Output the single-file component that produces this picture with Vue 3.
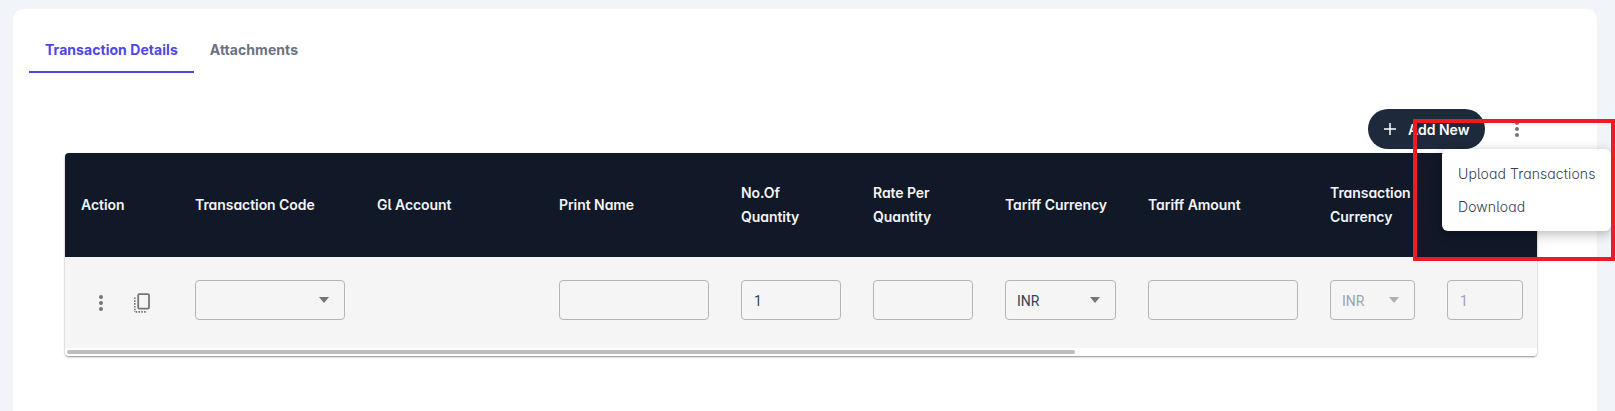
<template>
  <div class="page">
    <div class="card">
      <div class="tabs">
        <button
          v-for="(tab, idx) in tabs"
          :key="tab"
          type="button"
          class="tab"
          :class="{ active: idx === 0 }"
        >
          {{ tab }}
        </button>
      </div>

      <div class="toolbar">
        <button type="button" class="add-btn">
          <svg class="plus" viewBox="0 0 12 12" width="12" height="12">
            <path d="M6 0v12M0 6h12" stroke="#fff" stroke-width="1.5" fill="none" />
          </svg>
          Add New
        </button>
        <div class="more">
          <button type="button" class="dots-btn" aria-label="More">
            <span class="dots"></span>
          </button>
          <ul class="menu">
            <li v-for="item in menuItems" :key="item" class="menu-item">{{ item }}</li>
          </ul>
          <!-- annotation box from the screenshot -->
          <div class="highlight"></div>
        </div>
      </div>

      <div class="table-wrap">
        <table class="grid">
          <colgroup>
            <col v-for="col in columns" :key="col.key" :style="{ width: col.width + 'px' }" />
          </colgroup>
          <thead>
            <tr>
              <th v-for="col in columns" :key="col.key">
                <span v-for="line in col.title" :key="line" class="th-line">{{ line }}</span>
              </th>
            </tr>
          </thead>
          <tbody>
            <tr>
              <td v-for="col in columns" :key="col.key">
                <div v-if="col.type === 'action'" class="actions">
                  <button type="button" class="row-dots" aria-label="Row menu">
                    <span class="dots small"></span>
                  </button>
                  <svg class="copy" viewBox="0 0 18 20" width="18" height="20" fill="none">
                    <rect x="5.2" y="1.2" width="10.8" height="14.4" rx="1" stroke="#757575" stroke-width="1.8" />
                    <path d="M1.8 4.5V19" stroke="#757575" stroke-width="1.6" stroke-dasharray="1.6 1.2" />
                    <path d="M2.6 18.9H14" stroke="#757575" stroke-width="1.6" stroke-dasharray="1.6 1.2" />
                  </svg>
                </div>
                <div
                  v-else-if="col.type === 'select'"
                  class="field select"
                  :class="{ disabled: col.disabled }"
                  :style="{ width: col.field + 'px' }"
                >
                  <span class="value">{{ col.value }}</span>
                  <span class="caret"></span>
                </div>
                <input
                  v-else-if="col.type === 'input'"
                  class="field"
                  :class="{ disabled: col.disabled }"
                  :style="{ width: col.field + 'px' }"
                  :value="col.value"
                  :disabled="col.disabled"
                />
              </td>
            </tr>
          </tbody>
        </table>
        <div class="scroll-track">
          <div class="scroll-thumb"></div>
        </div>
      </div>
    </div>
  </div>
</template>

<script setup>
const tabs = ['Transaction Details', 'Attachments']
const menuItems = ['Upload Transactions', 'Download']

const columns = [
  { key: 'action', title: ['Action'], width: 114, type: 'action' },
  { key: 'code', title: ['Transaction Code'], width: 182, type: 'select', field: 150, value: '' },
  { key: 'gl', title: ['Gl Account'], width: 182, type: 'none' },
  { key: 'print', title: ['Print Name'], width: 182, type: 'input', field: 150, value: '' },
  { key: 'qty', title: ['No.Of', 'Quantity'], width: 132, type: 'input', field: 100, value: '1' },
  { key: 'rate', title: ['Rate Per', 'Quantity'], width: 132, type: 'input', field: 100, value: '' },
  { key: 'tcur', title: ['Tariff Currency'], width: 143, type: 'select', field: 111, value: 'INR' },
  { key: 'tamt', title: ['Tariff Amount'], width: 182, type: 'input', field: 150, value: '' },
  { key: 'cur', title: ['Transaction', 'Currency'], width: 117, type: 'select', field: 85, value: 'INR', disabled: true },
  { key: 'ex', title: [], width: 106, type: 'input', field: 76, value: '1', disabled: true },
]
</script>

<style scoped>
.page {
  height: 100vh;
  box-sizing: border-box;
  padding: 9px 18px 0 13px;
  background: #f1f4f9;
  overflow: hidden;
  font-family: Inter, "Noto Sans", sans-serif;
  font-feature-settings: "cv11", "cv05";
}

.card {
  height: 100vh;
  box-sizing: border-box;
  padding: 16px 16px 0;
  background: #fff;
  border-radius: 10px;
}

.tabs {
  display: flex;
}

.tab {
  height: 48px;
  padding: 2px 16px 0;
  border: none;
  border-bottom: 2px solid transparent;
  background: none;
  font: inherit;
  font-feature-settings: normal;
  font-size: 14px;
  font-weight: 700;
  letter-spacing: 0.05px;
  color: #6b7280;
}

.tab.active {
  color: #4f46e5;
  border-bottom-color: #4f46e5;
}

.toolbar {
  display: flex;
  justify-content: flex-end;
  align-items: center;
  gap: 16px;
  margin: 36px 48px 4px 0;
}

.add-btn {
  display: flex;
  align-items: center;
  gap: 12px;
  width: 117px;
  height: 40px;
  padding: 0 16px;
  border: none;
  border-radius: 20px;
  background: #1e293b;
  color: #fff;
  font: inherit;
  font-size: 14px;
  font-weight: 600;
  white-space: nowrap;
}

.plus {
  flex: none;
}

.more {
  position: relative;
  width: 32px;
  height: 40px;
}

.dots-btn {
  display: flex;
  align-items: center;
  justify-content: center;
  width: 32px;
  height: 40px;
  padding: 0;
  border: none;
  background: none;
}

.dots {
  display: block;
  width: 4px;
  height: 4px;
  border-radius: 50%;
  background: #757575;
  box-shadow: 0 -6px 0 #757575, 0 6px 0 #757575;
}

.dots.small {
  margin-top: 6px;
}

.menu {
  position: absolute;
  top: 100%;
  left: -59px;
  width: 169px;
  height: 82px;
  box-sizing: border-box;
  margin: 0;
  padding: 9px 0;
  list-style: none;
  background: #fff;
  border-radius: 6px;
  box-shadow: 0 4px 12px rgba(0, 0, 0, 0.22), 0 0 8px rgba(0, 0, 0, 0.08);
  z-index: 5;
}

.menu-item {
  height: 33px;
  padding-left: 16px;
  line-height: 32px;
  font-size: 14px;
  font-weight: 300;
  letter-spacing: 0.1px;
  color: #374151;
  white-space: nowrap;
}

.highlight {
  position: absolute;
  left: -88px;
  top: 10px;
  width: 202px;
  height: 142px;
  box-sizing: border-box;
  border: 4px solid #ed1c24;
  pointer-events: none;
  z-index: 6;
}

.table-wrap {
  width: 1472px;
  margin-left: 36px;
  overflow: hidden;
  border-radius: 4px;
  box-shadow: 0 1px 2px rgba(0, 0, 0, 0.45);
}

.grid {
  width: 1472px;
  table-layout: fixed;
  border-collapse: collapse;
}

th {
  height: 104px;
  padding: 0 16px;
  background: #111827;
  color: #f3f4f6;
  font-size: 14px;
  font-weight: 600;
  letter-spacing: -0.06px;
  line-height: 24px;
  text-align: left;
  white-space: nowrap;
}

.th-line {
  display: block;
}

td {
  padding: 23px 16px 28px;
  background: #f5f5f5;
  vertical-align: top;
}

.actions {
  display: flex;
  align-items: center;
  gap: 12px;
  height: 40px;
}

.row-dots {
  display: flex;
  align-items: center;
  justify-content: center;
  width: 40px;
  height: 40px;
  padding: 0;
  border: none;
  background: none;
}

.copy {
  flex: none;
  margin-top: 6px;
}

.field {
  display: block;
  height: 40px;
  box-sizing: border-box;
  padding: 2px 12px 0 11px;
  border: 1px solid #b5b5b5;
  border-radius: 4px;
  background: transparent;
  font-family: Roboto, sans-serif;
  font-size: 14px;
  color: #374151;
  outline: none;
}

input.field {
  padding: 2px 12px 0;
}

.select {
  display: flex;
  align-items: center;
  justify-content: space-between;
  padding-right: 15px;
}

.caret {
  width: 0;
  height: 0;
  margin-top: -2px;
  border-left: 5px solid transparent;
  border-right: 5px solid transparent;
  border-top: 6px solid #757575;
}

.field.disabled {
  color: #9ca3af;
}

.field.disabled .caret {
  border-top-color: #b0b0b0;
}

.scroll-track {
  height: 8px;
  padding: 2px;
  box-sizing: border-box;
  background: #fff;
}

.scroll-thumb {
  width: 1008px;
  height: 4px;
  border-radius: 2px;
  background: #bdbdbd;
}
</style>

<style>
html,
body {
  margin: 0;
  overflow: hidden;
}
</style>
